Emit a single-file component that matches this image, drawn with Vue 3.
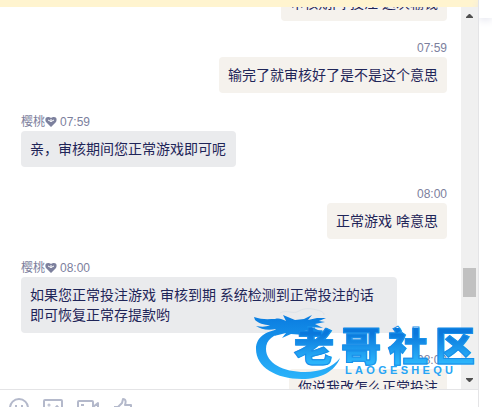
<template>
  <div class="app">
    <section class="chat">
      <div class="notice"></div>

      <div class="history">
        <div ref="listEl" class="list">
          <div
            v-for="(msg, i) in messages"
            :key="i"
            class="msg"
            :class="msg.mine ? 'msg--mine' : 'msg--agent'"
          >
            <div class="msg__meta">
              <template v-if="!msg.mine">
                <span>{{ agent }}</span>
                <svg class="msg__heart" viewBox="0 0 12 12" aria-hidden="true">
                  <path fill="currentColor" d="M6 11 1 6C0 4 0 1 3 1c1 0 2 0 3 1 1-1 2-1 3-1 3 0 3 3 2 5z" />
                  <path fill="none" stroke="#fff" stroke-width="1" d="M3 4l3 1.500L9 4M6 3v3" />
                </svg>
              </template>
              <time>{{ msg.time }}</time>
            </div>
            <div class="msg__bubble">{{ msg.text }}</div>
          </div>
        </div>

        <div class="scrollbar" aria-hidden="true">
          <svg class="scrollbar__arrow" viewBox="0 0 17 17"><path d="M5 11v-1l3-3h1l3 3v1z" /></svg>
          <div class="scrollbar__track">
            <div class="scrollbar__thumb"></div>
          </div>
          <svg class="scrollbar__arrow" viewBox="0 0 17 17"><path d="M5 6v1l3 3h1l3-3V6z" /></svg>
        </div>

        <div class="brand">
          <svg class="brand__dragon" viewBox="0 0 90 75" aria-hidden="true">
            <defs>
              <linearGradient id="dragon" x1="0" y1="0" x2="0" y2="75" gradientUnits="userSpaceOnUse">
                <stop offset="0.2" stop-color="#0c80e2" />
                <stop offset="1" stop-color="#2bb4fb" />
              </linearGradient>
            </defs>
            <g fill="url(#dragon)">
              <path d="M33 24C18 25 6 31 6 44c0 18 20 30 46 30 19 0 33-8 38-21-7 9-20 14-35 14-22 0-39-9-39-23 0-9 7-15 20-17z" />
              <path d="M4 12c8 3 15 2 21 2 4-1 7 0 11 2l-3-6 12 5 9-1 8-4-4 5 9-2h9l-7 3 6 1-10 2 8 4-11-1 10 5-14-2-8 2 5 3-14-1-9 4 4-5-12 3 6-5-8 2 4-4c-9 2-15 0-20-3 6 1 10 1 14-1-6 0-12-2-15-5z" />
            </g>
            <path fill="none" stroke="#dde3e8" d="M30 8c7-4 13 2 19-2s14-2 18-1 7 2 7 5" />
          </svg>
          <div class="brand__text">
            <div class="brand__name"><span v-for="c in '老哥社区'" :key="c">{{ c }}</span></div>
            <div class="brand__latin"><span v-for="(c, i) in 'LAOGESHEQU'" :key="i">{{ c }}</span></div>
          </div>
        </div>
      </div>

      <div class="toolbar">
        <button type="button" aria-label="表情">
          <svg viewBox="0 0 20 20"><circle cx="10" cy="10" r="9" /><path d="M7 7v2M13 7v2M6 12c2 3 6 3 8 0" /></svg>
        </button>
        <button type="button" aria-label="图片">
          <svg viewBox="0 0 20 20"><rect x="1" y="2" width="18" height="15" rx="1" /><circle cx="6" cy="7" r=".5" /><path d="m4 15 4-4 2 2 4-5 4 5" /></svg>
        </button>
        <button type="button" aria-label="视频">
          <svg class="wide" viewBox="0 0 22 20"><rect x="1" y="3" width="15" height="13" rx="1" /><path d="M4 7h3M16 9l5-4v10l-5-4" /></svg>
        </button>
        <button type="button" aria-label="点赞">
          <svg viewBox="0 0 20 20"><path d="M1 9h4v9H1M5 9l4-4 1-4c3 0 3 3 2 6h6v5l-2 6H5" /></svg>
        </button>
      </div>
    </section>

    <aside class="side">
      <div class="side__head"></div>
    </aside>
  </div>
</template>

<script setup>
import { onMounted, ref } from 'vue'

const agent = '樱桃'
const listEl = ref(null)

const messages = [
  { mine: true, time: '07:59', text: '审核期间 投注 这次输钱' },
  { mine: true, time: '07:59', text: '输完了就审核好了是不是这个意思' },
  { mine: false, time: '07:59', text: '亲，审核期间您正常游戏即可呢' },
  { mine: true, time: '08:00', text: '正常游戏 啥意思' },
  { mine: false, time: '08:00', text: '如果您正常投注游戏 审核到期 系统检测到正常投注的话即可恢复正常存提款哟' },
  { mine: true, time: '08:00', text: '你说我改怎么正常投注' }
]

onMounted(() => {
  listEl.value.scrollTop = 40
})
</script>

<style>
body { margin: 0; }
</style>

<style scoped>
.app {
  display: flex;
  height: 100vh;
  overflow: hidden;
  background: #fff;
  font-family: "Liberation Sans", "Noto Sans CJK SC", sans-serif;
}

.chat {
  display: flex;
  flex: 1;
  flex-direction: column;
  min-width: 0;
  border-right: 1px solid #e4e4e6;
}
.notice { flex: none; height: 7px; background: #fff4cf; }

/* 消息记录 */
.history { position: relative; display: flex; flex: 1; min-height: 0; }
.list {
  display: flex;
  flex: 1;
  flex-direction: column;
  min-width: 0;
  padding: 0 14px 0 21px;
  overflow: hidden;
}
.msg { display: flex; flex: none; flex-direction: column; }
.msg--mine { align-items: flex-end; margin-top: 18px; }
.msg--agent { align-items: flex-start; margin-top: 20px; }
.msg:first-child { margin-top: 0; }
.msg__meta {
  display: flex;
  align-items: center;
  color: #7c809d;
  font-size: 12px;
  line-height: 18px;
}
.msg__heart { width: 12px; height: 12px; margin-right: 3px; }
.msg__bubble {
  box-sizing: border-box;
  max-width: calc(100% - 50px);
  padding: 8px 9px;
  border-radius: 4px;
  color: #1f2558;
  font-size: 14px;
  line-height: 20px;
}
.msg--mine .msg__bubble { background: #f5f2ed; }
.msg--agent .msg__bubble { padding-right: 10px; background: #eaebed; }

/* 滚动条 */
.scrollbar { display: flex; flex: none; flex-direction: column; width: 17px; background: #f0f0f0; }
.scrollbar__arrow { flex: none; width: 17px; height: 17px; fill: #505050; }
.scrollbar__track {
  display: flex;
  flex: 1;
  flex-direction: column;
  justify-content: flex-end;
  padding: 0 2px 75px;
}
.scrollbar__thumb { height: 29px; background: #c1c1c1; }

/* 水印 */
.brand { position: absolute; right: 3px; bottom: 9px; display: flex; pointer-events: none; }
.brand__dragon { width: 90px; height: 75px; }
.brand__text { margin: 23px 0 0 -46px; color: #27a5f5; }
.brand__name { display: flex; gap: 7px; margin-bottom: -2px; font-size: 40px; font-weight: 900; line-height: 38px; }
.brand__name span {
  background: linear-gradient(#0a78dc 15%, #2bb4fb 90%);
  background-clip: text;
  color: transparent;
  -webkit-text-stroke: 1px #178fe9;
}
.brand__latin {
  display: flex;
  justify-content: space-between;
  margin: 0 22px 0 51px;
  font-size: 11px;
  font-weight: 700;
  line-height: 12px;
}

/* 工具栏 */
.toolbar {
  display: flex;
  flex: none;
  gap: 14px;
  box-sizing: border-box;
  height: 18px;
  padding: 8px 9px 0;
  overflow: hidden;
  border-top: 1px solid #e4e4e6;
}
.toolbar button { flex: none; height: 20px; padding: 0; border: 0; background: none; cursor: pointer; }
.toolbar svg {
  display: block;
  width: 20px;
  height: 20px;
  fill: none;
  stroke: #b4b9cb;
  stroke-width: 2;
  stroke-linejoin: round;
}
.toolbar .wide { width: 22px; }

.side { flex: none; width: 13px; }
.side__head { height: 18px; background: #fff; box-shadow: 0 2px 8px #e3e4ee; }
</style>
